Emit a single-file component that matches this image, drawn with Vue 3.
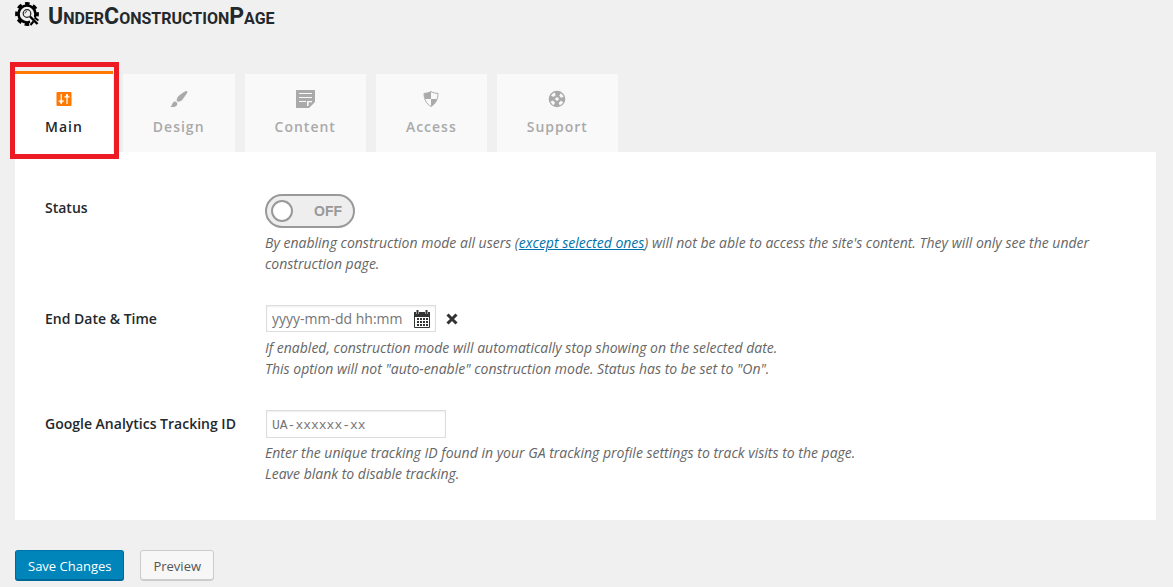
<script setup>
import { ref } from 'vue'

const tabs = ['Main', 'Design', 'Content', 'Access', 'Support']
const active = ref('Main')
const enabled = ref(false)
const endDate = ref('')
const trackingId = ref('')
</script>

<template>
  <div class="page">
    <header class="brand">
      <svg class="logo" viewBox="0 0 24 24" aria-hidden="true">
        <circle cx="12" cy="12" r="8.5" fill="none" stroke="#000" stroke-width="2.6" />
        <circle cx="12" cy="12" r="10.4" fill="none" stroke="#000" stroke-width="3" stroke-dasharray="4.6 3.57" stroke-dashoffset="2.3" />
        <path d="M14 15L17 13L24 19V24H16Z" fill="#f0f0f0" />
        <circle cx="12" cy="11.5" r="3.8" fill="none" stroke="#222" stroke-width="1.2" />
        <path d="M10 11.5A2 2 0 0 1 12 9.5" fill="none" stroke="#555" />
        <path d="M15 14.5L22.500 22" stroke="#000" stroke-width="2.4" />
        <path d="M15.500 23L18.500 19.500M19.500 15.500L23.500 18.500" stroke="#000" stroke-width="2" />
      </svg>
      <h1>U<span>nder</span>C<span>onstruction</span>P<span>age</span></h1>
    </header>

    <nav class="tabs" role="tablist">
      <button
        v-for="tab in tabs"
        :key="tab"
        type="button"
        role="tab"
        class="tab"
        :class="{ active: tab === active, framed: tab === 'Main' }"
        :aria-selected="tab === active"
        @click="active = tab"
      >
        <svg v-if="tab === 'Main'" viewBox="0 0 20 20" aria-hidden="true">
          <rect x="2.5" y="3" width="15" height="14" rx="1" fill="currentColor" />
          <path d="M7.2 5v10M13 5v10M10.3 8h5.4M4.500 12h5.400" stroke="#fff" stroke-width="1.2" />
          <path d="M5.200 12.300h4L7.200 15zM11 7.700L13 5L15 7.700z" fill="#fff" />
        </svg>
        <svg v-else-if="tab === 'Design'" viewBox="0 0 20 20" aria-hidden="true">
          <path fill="currentColor" d="M18.33 3.57s.27-.8-.31-1.36c-.53-.52-1.22-.24-1.22-.24-.61.3-5.76 3.47-7.67 5.57-.86.96-2.06 3.79-1.09 4.82.92.98 3.96-.17 4.79-1 2.06-2.06 5.21-7.17 5.5-7.79zM1.4 17.65c2.37-1.56 1.46-3.41 3.23-4.64.93-.65 2.22-.62 3.08.29.63.67.8 2.57-.16 3.46-1.57 1.45-4 1.55-6.15.89z" />
        </svg>
        <svg v-else-if="tab === 'Content'" viewBox="0 0 20 20" aria-hidden="true">
          <path fill="currentColor" fill-rule="evenodd" d="M1 1h19v12l-6 6H1zM4 4v1h13V4zM4 8v1h13V8zM4 12v1h7v-1zM12 17v-5h5v1.3h-3.4V17z" />
        </svg>
        <svg v-else-if="tab === 'Access'" viewBox="0 0 20 20" aria-hidden="true">
          <path fill="none" stroke="currentColor" d="M10 2.600c2 1.200 4.500 1.700 7 1.800c-.1 6-2.300 10.600-7 13c-4.700-2.400-6.900-7-7-13c2.500-.1 5-.6 7-1.800z" />
          <path fill="currentColor" d="M3 4.400c2.500-.1 5-.6 7-1.800V10H4.200C3.400 8.200 3 6.300 3 4.400zM10 10h5.800c-1.100 3.200-3 5.800-5.800 7.400z" />
        </svg>
        <svg v-else viewBox="0 0 20 20" aria-hidden="true">
          <circle cx="10" cy="10" r="8.300" fill="currentColor" />
          <circle cx="10" cy="10" r="5.500" fill="none" stroke="#f9f9f9" stroke-width="3" stroke-dasharray="3.600 5.040" stroke-dashoffset="-2.520" />
          <circle cx="10" cy="10" r="1.800" fill="#f9f9f9" />
        </svg>
        <span>{{ tab }}</span>
      </button>
    </nav>

    <main class="panel">
      <div class="row">
        <label class="name" for="status">Status</label>
        <div>
          <div class="toggle">
            <input id="status" v-model="enabled" type="checkbox" role="switch" />
            <span class="knob"></span>
            <span class="state">{{ enabled ? 'ON' : 'OFF' }}</span>
          </div>
          <p>
            By enabling construction mode all users (<a href="#access">except selected ones</a>) will not be able to
            access the site's content. They will only see the under construction page.
          </p>
        </div>
      </div>

      <div class="row">
        <label class="name" for="end-date">End Date &amp; Time</label>
        <div>
          <div class="date-line">
            <div class="date-box">
              <input id="end-date" v-model="endDate" type="text" placeholder="yyyy-mm-dd hh:mm" />
              <button type="button" class="icon-button" aria-label="Choose date">
                <svg class="calendar" viewBox="0 0 16 18" aria-hidden="true">
                  <path d="M.5 3v14.500h15V3" fill="#fff" stroke="#333" />
                  <path d="M0 2h16v5H0z" fill="#333" />
                  <path d="M3.500 0v4M12.500 0v4" stroke="#fff" stroke-width="3" />
                  <path d="M3.500 0v4M12.500 0v4" stroke="#333" stroke-width="2" />
                  <path d="M3 9h11M3 12h11M3 15h11" stroke="#333" stroke-width="2" stroke-dasharray="2 1" />
                </svg>
              </button>
            </div>
            <button type="button" class="icon-button" aria-label="Clear date" @click="endDate = ''">
              <svg class="clear" viewBox="0 0 12 12" aria-hidden="true">
                <path d="M1.500 1.500l9 9M10.500 1.500l-9 9" stroke="#333" stroke-width="3" />
              </svg>
            </button>
          </div>
          <p>
            If enabled, construction mode will automatically stop showing on the selected date.<br />
            This option will not "auto-enable" construction mode. Status has to be set to "On".
          </p>
        </div>
      </div>

      <div class="row">
        <label class="name" for="tracking">Google Analytics Tracking ID</label>
        <div>
          <input id="tracking" v-model="trackingId" class="tracking" type="text" placeholder="UA-xxxxxx-xx" />
          <p>
            Enter the unique tracking ID found in your GA tracking profile settings to track visits to the page.<br />
            Leave blank to disable tracking.
          </p>
        </div>
      </div>
    </main>

    <footer class="actions">
      <button type="button" class="button primary">Save Changes</button>
      <button type="button" class="button">Preview</button>
    </footer>
  </div>
</template>

<style>
html {
  background: #f0f0f0;
}
</style>

<style scoped>
.page {
  padding: 0 17px 6px 15px;
  font-family: "Open Sans", "Noto Sans", sans-serif;
  font-size: 14px;
  color: #23282d;
}
.page *,
.page *::after {
  box-sizing: border-box;
}
button,
input {
  margin: 0;
  font-family: inherit;
}
button {
  cursor: pointer;
}
.brand {
  display: flex;
  align-items: flex-start;
  gap: 9px;
  height: 32px;
  padding-top: 2px;
}
.logo {
  width: 24px;
  height: 24px;
}
h1 {
  margin: 0;
  font: 700 23px/30px Roboto, sans-serif;
}
h1 span {
  font-size: 16px;
  text-transform: uppercase;
}
.tabs {
  display: flex;
  align-items: flex-end;
  gap: 10px;
  margin-top: 39px;
}
.tab {
  display: flex;
  flex-direction: column;
  align-items: center;
  gap: 8px;
  height: 78px;
  padding: 15px 30px 0;
  border: 0;
  background: #f9f9f9;
  color: #aaa;
  font-size: 14px;
  font-weight: 600;
  line-height: 20px;
  letter-spacing: 1px;
}
.tab svg {
  width: 20px;
  height: 20px;
}
.tab.active {
  height: 81px;
  border-top: 3px solid #ff7900;
  background: #fff;
  color: #ff7900;
}
.tab.active span {
  color: #23282d;
}
.tab.framed {
  position: relative;
}
.tab.framed::after {
  content: "";
  position: absolute;
  inset: -12px -6px -7px -5px;
  border: 5px solid #ed1c24;
}
.panel {
  display: flex;
  flex-direction: column;
  gap: 31px;
  padding: 42px 30px 36px;
  background: #fff;
}
.row {
  display: grid;
  grid-template-columns: 220px minmax(0, 830px);
}
.name {
  padding-top: 3px;
  font-weight: 600;
  line-height: 21px;
}
.row p {
  margin: 4px 0 0;
  color: #666;
  font-style: italic;
  line-height: 21px;
}
a {
  color: #0073aa;
}
.toggle {
  position: relative;
  display: flex;
  align-items: center;
  justify-content: space-between;
  width: 90px;
  height: 34px;
  padding: 0 11px 0 4px;
  border: 2px solid #999;
  border-radius: 17px;
  background: #eee;
}
.toggle input {
  position: absolute;
  inset: 0;
  width: 100%;
  height: 100%;
  opacity: 0;
}
.knob {
  width: 22px;
  height: 22px;
  border: 2px solid #999;
  border-radius: 50%;
  background: #fff;
}
.state {
  color: #999;
  font: 700 14px/20px "Liberation Sans", Arial, sans-serif;
}
.date-line {
  display: flex;
  align-items: center;
  gap: 10px;
  margin-left: 1px;
  padding-bottom: 1px;
}
.date-box {
  display: flex;
  align-items: center;
  width: 170px;
  height: 27px;
  padding: 0 5px;
  border: 1px solid #ddd;
  box-shadow: inset 0 1px 2px rgba(0, 0, 0, 0.07);
}
.date-box input {
  flex: 1;
  min-width: 0;
  padding: 0;
  border: 0;
  outline: 0;
  background: none;
  font-size: 14px;
}
.icon-button {
  display: flex;
  padding: 0;
  border: 0;
  background: none;
}
.calendar {
  width: 16px;
  height: 18px;
}
.clear {
  width: 12px;
  height: 12px;
}
.tracking {
  display: block;
  width: 180px;
  height: 28px;
  margin-left: 1px;
  padding: 5px 5px 2px;
  border: 1px solid #ddd;
  box-shadow: inset 0 1px 2px rgba(0, 0, 0, 0.07);
  font: 13px "Liberation Mono", monospace;
}
::placeholder {
  color: #757575;
  opacity: 1;
}
.actions {
  display: flex;
  gap: 16px;
  margin-top: 30px;
}
.button {
  height: 31px;
  padding: 0 12px;
  border: 1px solid #ccc;
  border-radius: 3px;
  background: #f7f7f7;
  box-shadow: inset 0 -1px 0 #ccc;
  color: #555;
  font-size: 13px;
}
.button.primary {
  border-color: #0073aa #006799 #006799;
  background: #0085ba;
  box-shadow: inset 0 -1px 0 #006799;
  color: #fff;
}
</style>
